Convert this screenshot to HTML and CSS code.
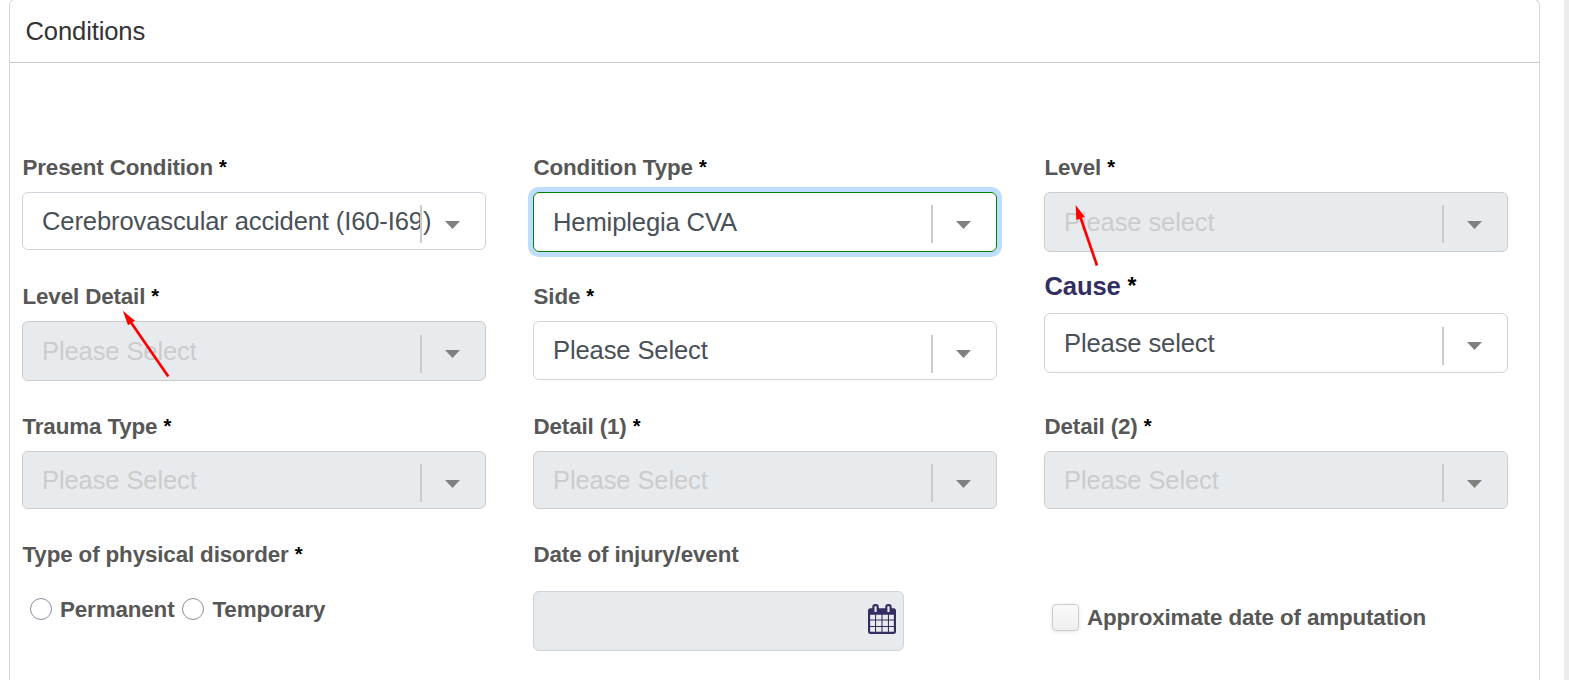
FILE: index.html
```html
<!DOCTYPE html>
<html lang="en">
<head>
<meta charset="utf-8">
<title>Conditions</title>
<link rel="stylesheet" href="styles.css">
</head>
<body>
<main class="card">
  <h1 class="card-title">Conditions</h1>
  <form class="columns">
    <div class="column">
      <div class="field row-1">
        <div class="label">Present Condition <span class="req">*</span></div>
        <div class="select short">Cerebrovascular accident (I60-I69)</div>
      </div>
      <div class="field row-2">
        <div class="label">Level Detail <span class="req">*</span></div>
        <div class="select disabled low">Please Select</div>
      </div>
      <div class="field row-3">
        <div class="label">Trauma Type <span class="req">*</span></div>
        <div class="select short disabled">Please Select</div>
      </div>
      <div class="field">
        <div class="label">Type of physical disorder <span class="req">*</span></div>
        <div class="radios">
          <span class="radio"></span><span class="radio-text">Permanent</span>
          <span class="radio"></span><span class="radio-text">Temporary</span>
        </div>
      </div>
    </div>
    <div class="column">
      <div class="field row-1">
        <div class="label">Condition Type <span class="req">*</span></div>
        <div class="select focused">Hemiplegia CVA</div>
      </div>
      <div class="field row-2">
        <div class="label">Side <span class="req">*</span></div>
        <div class="select medium low">Please Select</div>
      </div>
      <div class="field row-3">
        <div class="label">Detail (1) <span class="req">*</span></div>
        <div class="select short disabled">Please Select</div>
      </div>
      <div class="field">
        <div class="label">Date of injury/event</div>
        <div class="date">
          <svg class="calendar" viewBox="0 0 1664 1792" preserveAspectRatio="none"><path d="M128 1664h288v-288h-288v288zM480 1664h320v-288h-320v288zM128 1312h288v-320h-288v320zM480 1312h320v-320h-320v320zM128 928h288v-288h-288v288zM864 1664h320v-288h-320v288zM480 928h320v-288h-320v288zM1248 1664h288v-288h-288v288zM864 1312h320v-320h-320v320zM512 448v-288q0-13-9.5-22.5t-22.5-9.5h-64q-13 0-22.500 9.500t-9.500 22.500v288q0 13 9.500 22.500t22.500 9.500h64q13 0 22.500-9.500t9.500-22.500zM1248 1312h288v-320h-288v320zM864 928h320v-288h-320v288zM1248 928h288v-288h-288v288zM1280 448v-288q0-13-9.500-22.500t-22.500-9.500h-64q-13 0-22.500 9.500t-9.500 22.500v288q0 13 9.500 22.500t22.500 9.500h64q13 0 22.500-9.500t9.500-22.500zM1664 384v1280q0 52-38 90t-90 38h-1408q-52 0-90-38t-38-90v-1280q0-52 38-90t90-38h128v-96q0-66 47-113t113-47h64q66 0 113 47t47 113v96h384v-96q0-66 47-113t113-47h64q66 0 113 47t47 113v96h128q52 0 90 38t38 90z"/></svg>
        </div>
      </div>
    </div>
    <div class="column">
      <div class="field row-cause-above">
        <div class="label">Level <span class="req">*</span></div>
        <div class="select disabled">Please select</div>
      </div>
      <div class="field row-cause">
        <div class="label large">Cause <span class="req">*</span></div>
        <div class="select low">Please select</div>
      </div>
      <div class="field row-3">
        <div class="label">Detail (2) <span class="req">*</span></div>
        <div class="select short disabled">Please Select</div>
      </div>
      <div class="check-row">
        <span class="checkbox"></span>
        <span class="check-text">Approximate date of amputation</span>
      </div>
    </div>
  </form>
</main>
<div class="scroll-edge"></div>
<svg class="arrows" viewBox="0 0 1569 680">
  <path class="shaft" d="M1080 216L1097 265.500M130 321L168.300 376.500"/>
  <path class="head" d="M1075.700 205L1084.700 216.700L1076.300 220ZM122.800 310.800L135 320.800L128 325.200Z"/>
</svg>
</body>
</html>
```

FILE: styles.css
```css
* { box-sizing: border-box; }

body {
  margin: 0;
  height: 680px;
  overflow: hidden;
  display: flex;
  justify-content: space-between;
  background: #fff;
  color: #575757;
  font-family: "Liberation Sans", Arial, sans-serif;
  letter-spacing: -0.14px;
}

.card {
  width: 1531px;
  height: 681px;
  margin: -1px 0 0 9px;
  flex: none;
  border: 1px solid #d9d9d9;
  border-bottom: 0;
  border-radius: 6px 6px 0 0;
}

.card-title {
  margin: 0;
  height: 63px;
  padding: 0 15.5px;
  border-bottom: 1px solid #c9c9c9;
  color: #333;
  font-size: 25.6px;
  font-weight: 400;
  line-height: 63px;
}

.columns {
  display: flex;
  gap: 47px;
  padding: 90px 0 0 12px;
}

.column { width: 464px; flex: none; }

.row-1 { height: 129px; }
.row-2 { height: 130px; }
.row-3 { height: 128px; }
.row-cause-above { height: 117px; }
.row-cause { height: 142px; }

.label {
  height: 28px;
  margin-bottom: 11px;
  padding-left: 0.5px;
  font-size: 22.4px;
  font-weight: 700;
  line-height: 30px;
  white-space: nowrap;
}

.label.large {
  height: 32px;
  color: #322e61;
  font-size: 25.6px;
  line-height: 32px;
}

.req {
  color: #000;
  font-size: 0.9em;
  line-height: 1;
  vertical-align: 1px;
}

.select {
  position: relative;
  height: 60px;
  padding-left: 19px;
  border: 1px solid #ced4da;
  border-radius: 6px;
  color: #495057;
  font-size: 25.6px;
  line-height: 58px;
  white-space: nowrap;
}

.select.medium { height: 59px; line-height: 57px; }
.select.short { height: 58px; line-height: 56px; }

.select::before {
  content: "";
  position: absolute;
  top: 12px;
  right: 63px;
  width: 2px;
  height: 38px;
  background: #ccc;
}

.select.low::before { top: 13px; }

.select::after {
  content: "";
  position: absolute;
  top: 28px;
  right: 25px;
  width: 15px;
  height: 8px;
  background: #808080;
  clip-path: polygon(0 0, 100% 0, 50% 100%);
}

.select.disabled {
  border-color: #ccc;
  background: #e8ebee;
  color: #ccc;
}

.select.focused {
  border-color: #008000;
  box-shadow: 0 0 0 5px #bfdeff;
}

.radios {
  display: flex;
  align-items: center;
  height: 28px;
  margin-top: 27px;
  padding-left: 8px;
  font-size: 22.4px;
  font-weight: 700;
}

.radio {
  width: 22px;
  height: 22px;
  margin-right: 8px;
  border: 1px solid #8f8f9d;
  border-radius: 50%;
}

.radio-text { margin-right: 8px; padding-top: 2px; }

.date {
  display: flex;
  justify-content: flex-end;
  width: 371px;
  height: 60px;
  margin-top: 23px;
  padding: 12px 7px 0 0;
  border: 1px solid #ced4da;
  border-radius: 6px;
  background: #e8ebee;
}

.calendar {
  width: 28px;
  height: 30px;
  fill: #322e61;
}

.check-row {
  display: flex;
  align-items: center;
  height: 28px;
  margin-top: 63px;
  padding-left: 8px;
  gap: 8px;
  font-size: 22.4px;
  font-weight: 700;
}

.check-text { padding-top: 2px; }

.checkbox {
  width: 27px;
  height: 27px;
  border: 1px solid #ccc;
  border-radius: 4px;
  background: linear-gradient(#fafafa, #efefef);
  box-shadow: 0 1px 4px rgba(0, 0, 0, 0.1);
}

.scroll-edge {
  width: 5px;
  height: 680px;
  background: #ececec;
}

.arrows {
  position: absolute;
  top: 0;
  left: 0;
  width: 1569px;
  height: 680px;
  pointer-events: none;
}

.shaft { fill: none; stroke: #f00; stroke-width: 2.7px; }
.head { fill: #f00; }
```
